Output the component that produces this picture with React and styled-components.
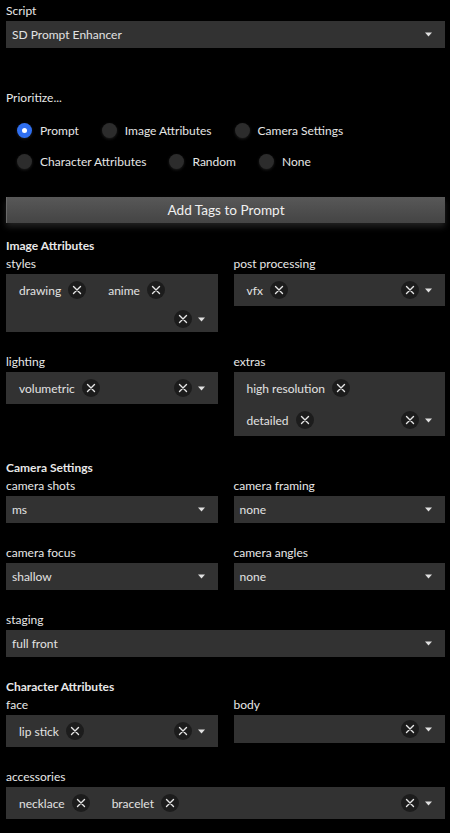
import React from 'react';
import styled, { createGlobalStyle } from 'styled-components';

const GlobalStyle = createGlobalStyle`
  body {
    margin: 0;
    background: #000;
    color: #e6e6e6;
    font-family: Lato, "Noto Sans", sans-serif;
    font-size: 12px;
  }
`;

// Layout
const Page = styled.div`
  width: 450px;
  box-sizing: border-box;
  padding: 2px 5px 12px 6px;
  display: flex;
  flex-direction: column;
`;

const Field = styled.div`
  display: flex;
  flex-direction: column;
  grid-column: ${p => (p.$wide ? '1 / -1' : 'auto')};
`;

const Label = styled.div`
  height: 18px;
  line-height: 18px;
  margin-bottom: 1px;
  margin-top: ${p => p.$top || 0}px;
  color: #e8e8e8;
  white-space: nowrap;
`;

const Heading = styled.div`
  height: 18px;
  line-height: 18px;
  font-weight: 700;
  color: #e8e8e8;
  margin-top: ${p => p.$top || 0}px;
`;

const Grid = styled.div`
  display: grid;
  grid-template-columns: 1fr 1fr;
  column-gap: 16px;
  row-gap: 21px;
  align-items: start;
`;

// Dropdowns
const Select = styled.div`
  height: 27px;
  background: #323232;
  display: flex;
  align-items: center;
  justify-content: space-between;
  padding: 0 13px 0 6px;
  color: #e2e2e2;
`;

const Caret = () => (
  <svg width="7" height="5" viewBox="0 0 7 5">
    <path d="M0 0.5 L7 0.5 L3.5 4.5 Z" fill="#e0e0e0" />
  </svg>
);

const MultiBox = styled.div`
  background: #323232;
  display: flex;
  flex-wrap: wrap;
  align-items: center;
  row-gap: 8px;
  column-gap: 8px;
  padding: 4px 13px 4px 6px;
`;

const Chip = styled.div`
  height: 24px;
  display: flex;
  align-items: center;
  gap: 7px;
  padding: 0 7px;
  color: #e2e2e2;
  white-space: nowrap;
`;

const CloseDot = styled.span`
  width: 18px;
  height: 18px;
  border-radius: 50%;
  background: #1c1c1c;
  display: inline-flex;
  align-items: center;
  justify-content: center;
`;

const Controls = styled.div`
  margin-left: auto;
  height: ${p => (p.$ownRow ? 18 : 20)}px;
  flex-basis: ${p => (p.$ownRow ? '100%' : 'auto')};
  display: flex;
  align-items: center;
  justify-content: flex-end;
  gap: 6px;
`;

const Cross = () => (
  <svg width="10" height="10" viewBox="0 0 10 10">
    <path d="M1.5 1.5 L8.5 8.5 M8.5 1.5 L1.5 8.5" stroke="#e6e6e6" strokeWidth="1.4" strokeLinecap="round" />
  </svg>
);

// Radios
const RadioGroup = styled.div`
  display: flex;
  flex-direction: column;
  gap: 7px;
  padding-left: 11px;
  margin-top: 10px;
`;

const RadioRow = styled.div`
  display: flex;
  gap: 23px;
`;

const RadioItem = styled.label`
  height: 24px;
  display: flex;
  align-items: center;
  gap: 8px;
  color: #e6e6e6;
`;

const RadioDot = styled.span`
  width: 15px;
  height: 15px;
  border-radius: 50%;
  box-sizing: border-box;
  background: ${p => (p.$on ? '#2f6ff0' : '#2c2c2c')};
  box-shadow: 0 1px 3px rgba(90, 90, 90, 0.35);
  display: flex;
  align-items: center;
  justify-content: center;
  &::after {
    content: '';
    display: ${p => (p.$on ? 'block' : 'none')};
    width: 5px;
    height: 5px;
    border-radius: 50%;
    background: #fff;
  }
`;

const Button = styled.button`
  margin-top: 24px;
  height: 26px;
  border: none;
  border-left: 1px solid #6a6a6a;
  background: linear-gradient(#585858, #444);
  box-shadow: 0 4px 6px rgba(70, 70, 70, 0.45);
  color: #f0f0f0;
  font-family: inherit;
  font-size: 13.6px;
`;

const Multi = ({ tags, controlsOwnRow }) => (
  <MultiBox>
    {tags.map(t => (
      <Chip key={t}>
        {t}
        <CloseDot><Cross /></CloseDot>
      </Chip>
    ))}
    <Controls $ownRow={controlsOwnRow}>
      <CloseDot><Cross /></CloseDot>
      <Caret />
    </Controls>
  </MultiBox>
);

const Single = ({ value }) => (
  <Select>
    <span>{value}</span>
    <Caret />
  </Select>
);

const priorities = [
  ['Prompt', 'Image Attributes', 'Camera Settings'],
  ['Character Attributes', 'Random', 'None']
];

const App = () => (
  <Page>
    <GlobalStyle />
    <Field>
      <Label>Script</Label>
      <Single value="SD Prompt Enhancer" />
    </Field>

    <Label $top={41}>Prioritize...</Label>
    <RadioGroup>
      {priorities.map((row, r) => (
        <RadioRow key={r}>
          {row.map(p => (
            <RadioItem key={p}>
              <RadioDot $on={p === 'Prompt'} />
              {p}
            </RadioItem>
          ))}
        </RadioRow>
      ))}
    </RadioGroup>

    <Button>Add Tags to Prompt</Button>

    <Heading $top={14}>Image Attributes</Heading>
    <Grid>
      <Field>
        <Label>styles</Label>
        <Multi tags={['drawing', 'anime']} controlsOwnRow />
      </Field>
      <Field>
        <Label>post processing</Label>
        <Multi tags={['vfx']} />
      </Field>
      <Field>
        <Label>lighting</Label>
        <Multi tags={['volumetric']} />
      </Field>
      <Field>
        <Label>extras</Label>
        <Multi tags={['high resolution', 'detailed']} />
      </Field>
    </Grid>

    <Heading $top={23}>Camera Settings</Heading>
    <Grid>
      <Field>
        <Label>camera shots</Label>
        <Single value="ms" />
      </Field>
      <Field>
        <Label>camera framing</Label>
        <Single value="none" />
      </Field>
      <Field>
        <Label>camera focus</Label>
        <Single value="shallow" />
      </Field>
      <Field>
        <Label>camera angles</Label>
        <Single value="none" />
      </Field>
      <Field $wide>
        <Label>staging</Label>
        <Single value="full front" />
      </Field>
    </Grid>

    <Heading $top={21}>Character Attributes</Heading>
    <Grid>
      <Field>
        <Label>face</Label>
        <Multi tags={['lip stick']} />
      </Field>
      <Field>
        <Label>body</Label>
        <Multi tags={[]} />
      </Field>
      <Field $wide>
        <Label>accessories</Label>
        <Multi tags={['necklace', 'bracelet']} />
      </Field>
    </Grid>
  </Page>
);

export default App;
